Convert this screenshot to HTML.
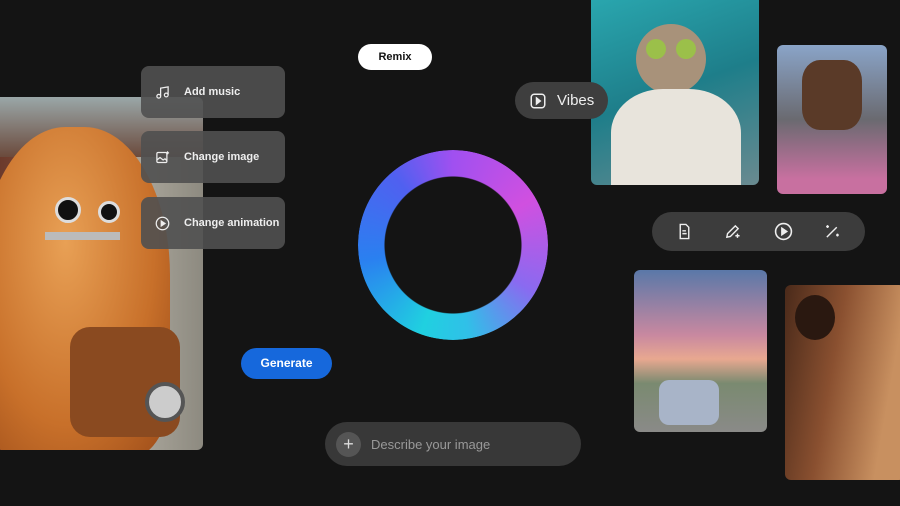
<!DOCTYPE html>
<html><head><style>
*{margin:0;padding:0;box-sizing:border-box}
body{width:900px;height:506px;background:#141414;position:relative;overflow:hidden;font-family:"Liberation Sans",sans-serif}
.a{position:absolute}
.card{position:absolute;left:141px;width:144px;height:52px;background:rgba(80,80,80,.9);border-radius:8px;color:#eee;font-size:11px;font-weight:bold;display:flex;align-items:center}
.card svg{margin-left:14px;margin-right:14px}
</style></head><body>
<div class="a" style="left:0;top:97px;width:203px;height:353px;border-radius:0 6px 6px 0;overflow:hidden;background:linear-gradient(90deg,#6b3a2c 0,#8a5a44 40%,#a9a59a 70%,#8d8a80 100%)">
  <div class="a" style="left:0;top:0;width:203px;height:60px;background:linear-gradient(#9aa7a8,#6b4a3c)"></div>
  <div class="a" style="left:-20px;top:30px;width:190px;height:330px;border-radius:45% 45% 20% 20%;background:radial-gradient(ellipse at 45% 35%,#e8a055,#c8702a 60%,#9a4a18)"></div>
  <div class="a" style="left:55px;top:100px;width:26px;height:26px;border-radius:50%;background:#111;border:3px solid #ddd"></div>
  <div class="a" style="left:98px;top:104px;width:22px;height:22px;border-radius:50%;background:#111;border:3px solid #ddd"></div>
  <div class="a" style="left:45px;top:135px;width:75px;height:8px;background:#bbb"></div>
  <div class="a" style="left:70px;top:230px;width:110px;height:110px;border-radius:20px;background:#8a4a20"></div>
  <div class="a" style="left:145px;top:285px;width:40px;height:40px;border-radius:50%;background:#ccc;border:4px solid #555"></div>
</div>
<div class="card" style="top:66px"><svg width="15" height="15" viewBox="0 0 24 24" fill="none" stroke="#eee" stroke-width="2"><path d="M9 18V5l12-2v13"/><circle cx="6" cy="18" r="3"/><circle cx="18" cy="16" r="3"/></svg>Add music</div>
<div class="card" style="top:131px"><svg width="15" height="15" viewBox="0 0 24 24" fill="none" stroke="#eee" stroke-width="2"><rect x="3" y="4" width="16" height="16" rx="2"/><path d="M3 16l5-4 5 4 3-2 3 3"/><path d="M20 2v5M17.5 4.5h5"/></svg>Change image</div>
<div class="card" style="top:197px"><svg width="15" height="15" viewBox="0 0 24 24" fill="none" stroke="#eee" stroke-width="2"><circle cx="12" cy="12" r="10"/><path d="M10 8l6 4-6 4z" fill="#eee"/></svg>Change animation</div>
<div class="a" style="left:358px;top:44px;width:74px;height:26px;border-radius:13px;background:#fff;color:#111;font-size:11px;font-weight:bold;text-align:center;line-height:26px">Remix</div>
<div class="a" style="left:358px;top:150px;width:190px;height:190px;border-radius:50%;background:conic-gradient(from 0deg,#a050f0,#d050e0 60deg,#8a6af0 120deg,#30c0e8 170deg,#20d0e0 200deg,#2a80f0 260deg,#5060f0 320deg,#a050f0 360deg);-webkit-mask:radial-gradient(circle,transparent 68px,#000 69px);mask:radial-gradient(circle,transparent 68px,#000 69px)"></div>
<div class="a" style="left:241px;top:348px;width:91px;height:31px;border-radius:16px;background:#1668dc;color:#fff;font-size:12px;font-weight:bold;text-align:center;line-height:31px">Generate</div>
<div class="a" style="left:325px;top:422px;width:256px;height:44px;border-radius:22px;background:#383838;color:#999;font-size:13px;display:flex;align-items:center"><div style="width:25px;height:25px;border-radius:50%;background:#555;color:#ddd;font-size:18px;text-align:center;line-height:24px;margin:0 10px 0 11px">+</div>Describe your image</div>
<div class="a" style="left:591px;top:-6px;width:168px;height:191px;border-radius:6px;overflow:hidden;background:linear-gradient(160deg,#2aa8b0,#1e7e8a 50%,#6a8a90)">
  <div class="a" style="left:45px;top:30px;width:70px;height:70px;border-radius:50%;background:#a8927a"></div>
  <div class="a" style="left:55px;top:45px;width:20px;height:20px;border-radius:50%;background:#9bc04a"></div>
  <div class="a" style="left:85px;top:45px;width:20px;height:20px;border-radius:50%;background:#9bc04a"></div>
  <div class="a" style="left:20px;top:95px;width:130px;height:110px;border-radius:40% 40% 0 0;background:#e8e4dc"></div>
</div>
<div class="a" style="left:515px;top:82px;width:93px;height:37px;border-radius:19px;background:#3e3e3e;color:#eee;font-size:15px;display:flex;align-items:center"><svg style="margin:0 10px 0 14px" width="18" height="18" viewBox="0 0 24 24" fill="none" stroke="#eee" stroke-width="2"><rect x="3" y="3" width="18" height="18" rx="4"/><path d="M10 8l5 4-5 4z" fill="#eee"/></svg>Vibes</div>
<div class="a" style="left:777px;top:45px;width:110px;height:149px;border-radius:6px;background:linear-gradient(#8aa4c8,#6a6a70 50%,#c870a0 90%)"><div class="a" style="left:25px;top:15px;width:60px;height:70px;background:#5a3a28;border-radius:30%"></div></div>
<div class="a" style="left:652px;top:212px;width:213px;height:39px;border-radius:20px;background:#3c3c3c">
<svg class="a" style="left:24px;top:11px" width="17" height="17" viewBox="0 0 24 24" fill="none" stroke="#eee" stroke-width="2"><path d="M6 2h8l4 4v16H6z"/><path d="M9 11h5M9 15h6"/></svg>
<svg class="a" style="left:72px;top:11px" width="17" height="17" viewBox="0 0 24 24" fill="none" stroke="#eee" stroke-width="2"><path d="M4 20l1-5L16 4l4 4L9 19z"/><path d="M19 15v6M16 18h6"/></svg>
<svg class="a" style="left:122px;top:10px" width="19" height="19" viewBox="0 0 24 24" fill="none" stroke="#eee" stroke-width="2"><circle cx="12" cy="12" r="10"/><path d="M10 8l6 4-6 4z" fill="#eee"/></svg>
<svg class="a" style="left:172px;top:11px" width="17" height="17" viewBox="0 0 24 24" fill="none" stroke="#eee" stroke-width="2"><path d="M4 20L18 6"/><path d="M5 3v4M3 5h4M19 15v4M17 17h4"/></svg>
</div>
<div class="a" style="left:634px;top:270px;width:133px;height:162px;border-radius:6px;background:linear-gradient(#5a78a8,#c888a0 40%,#e8a890 55%,#7a8a70 70%,#8a8a88)"><div class="a" style="left:25px;top:110px;width:60px;height:45px;background:#a8b4c8;border-radius:10px"></div></div>
<div class="a" style="left:785px;top:285px;width:120px;height:195px;border-radius:6px;background:linear-gradient(100deg,#4a2a1a,#8a5030 40%,#c89060 80%)"><div class="a" style="left:10px;top:10px;width:40px;height:45px;border-radius:50%;background:#2a1810"></div></div>
</body></html>
